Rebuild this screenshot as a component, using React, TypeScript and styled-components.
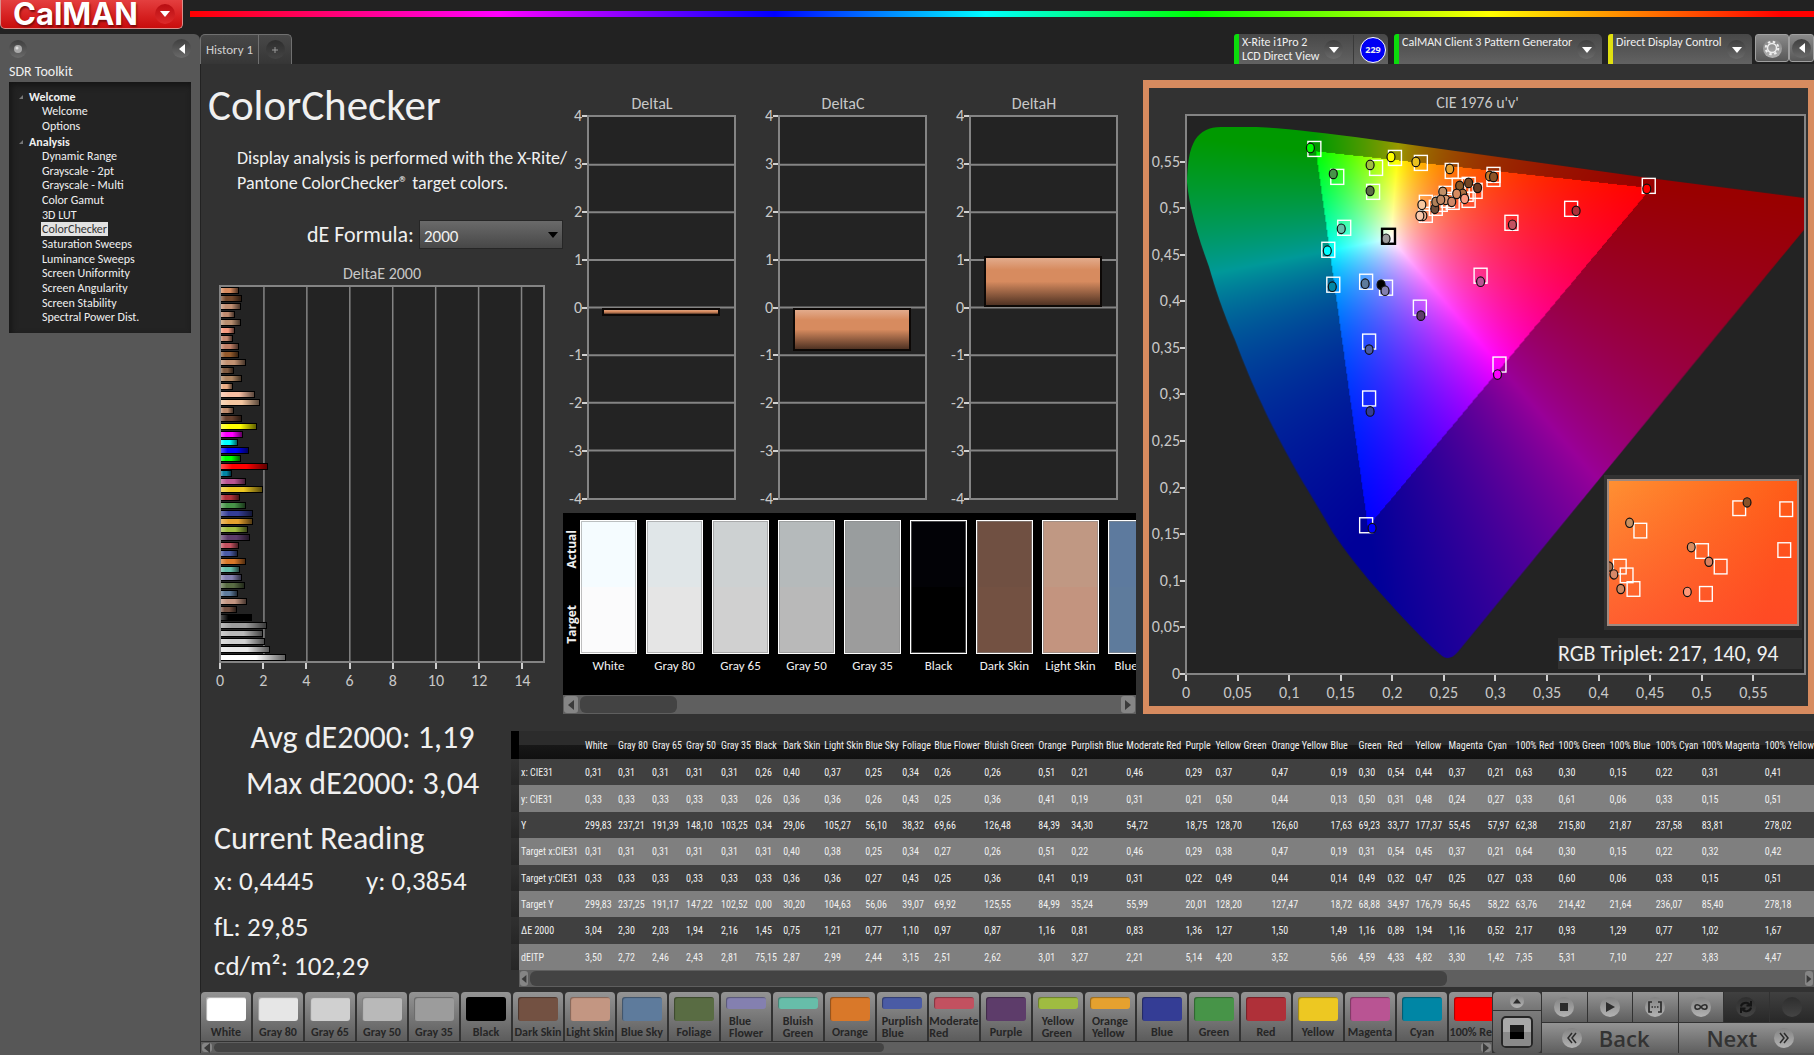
import React, { useEffect, useRef } from 'react';
import styled, { createGlobalStyle } from 'styled-components';

const SANS = 'Carlito, Calibri, Lato, sans-serif';
const HUMANIST = '"Open Sans", "Noto Sans", sans-serif';
const NARROW = '"Roboto Condensed", Carlito, sans-serif';

const color = {
  chrome: '#222222',
  panel: '#323232',
  plot: '#232323',
  line: '#848484',
  text: '#f0f0f0',
  axis: '#c8c8c8',
  track: '#5f5f5f',
  thumb: '#434343',
  accent: '#d78b5f',
};

const Global = createGlobalStyle`
  * { box-sizing: border-box; }
  body { margin: 0; background: ${color.chrome}; color: ${color.text}; font-family: ${SANS}; overflow: hidden; }
  button { border: 0; padding: 0; margin: 0; font: inherit; color: inherit; background: none; cursor: pointer; }
  h1, h2, p, ul, dl, dd, dt { margin: 0; padding: 0; }
  ul { list-style: none; }
`;

/* ---------- shell ---------- */

const Shell = styled.div`
  min-height: 100vh;
  display: grid;
  grid-template-rows: 34px 1fr;
  background: ${color.chrome};
`;

const TopBar = styled.header`
  display: flex;
  align-items: flex-start;
  gap: 7px;
`;

const Logo = styled.button`
  flex: none;
  display: flex;
  align-items: center;
  justify-content: space-between;
  width: 183px;
  height: 29px;
  padding: 0 7px 1px 12px;
  border: 1px solid #d9908c;
  border-top: 0;
  border-radius: 0 0 5px 5px;
  background: linear-gradient(#e43f3f, #d51f1f 60%, #c80d0d);
  font: 700 31px/28px Inter, sans-serif;
  color: #fff;
  text-shadow: 1px 2px 2px #7a0a0a;
`;

const Spectrum = styled.div`
  flex: 1;
  height: 6px;
  margin-top: 11px;
  background: linear-gradient(90deg, #f00, #f0f 19%, #00f 36%, #0ff 49%, #0f0 62%, #ff0 80%, #f00 98%);
`;

const Body = styled.div`
  display: grid;
  grid-template-columns: 200px minmax(0, 1fr);
`;

const Dial = styled.span<{ $size: number; $tone?: 'red' | 'dark' | 'light' | 'off' }>`
  flex: none;
  display: inline-flex;
  align-items: center;
  justify-content: center;
  width: ${(p) => p.$size}px;
  height: ${(p) => p.$size}px;
  border-radius: 50%;
  background: ${(p) =>
    p.$tone === 'red'
      ? 'linear-gradient(#b80d12, #dd2a2a)'
      : p.$tone === 'light'
        ? 'linear-gradient(#828282, #b4b4b4)'
        : p.$tone === 'off'
          ? 'linear-gradient(#2e2e2e, #444444)'
          : 'linear-gradient(#3f3f3f, #6a6a6a)'};
`;

/* ---------- sidebar ---------- */

const Sidebar = styled.aside`
  padding: 5px 9px 0;
  border-top-right-radius: 6px;
  background: #575757;
`;

const SidebarTools = styled.div`
  display: flex;
  align-items: center;
  justify-content: space-between;
  height: 19px;
  button {
    display: flex;
  }
`;

const SidebarTitle = styled.h2`
  margin-top: 3px;
  font-size: 14px;
  font-weight: 400;
  line-height: 21px;
`;

const Tree = styled.nav`
  height: 251px;
  padding: 7px 10px 0;
  background: ${color.plot};
  box-shadow: inset 2px 3px 6px #141414;
  font-size: 12px;
`;

const TreeGroup = styled.div`
  display: flex;
  align-items: center;
  gap: 6px;
  height: 15px;
  font-weight: 700;
`;

const TreeList = styled.ul<{ $rows: number }>`
  display: grid;
  grid-template-rows: repeat(${(p) => p.$rows}, 1fr);
  height: ${(p) => (p.$rows > 2 ? 176 : 30)}px;
  padding-left: 22px;
`;

const TreeLink = styled.a<{ $active?: boolean }>`
  display: inline-block;
  padding: 0 1px;
  line-height: 14px;
  text-decoration: none;
  color: ${(p) => (p.$active ? '#333' : color.text)};
  background: ${(p) => (p.$active ? '#e2e2e2' : 'transparent')};
`;

/* ---------- tabs and devices ---------- */

const Workspace = styled.div`
  display: grid;
  grid-template-rows: 30px auto 63px;
  align-content: start;
  min-width: 0;
`;

const TabStrip = styled.div`
  display: flex;
  justify-content: space-between;
`;

const Tabs = styled.div`
  display: flex;
  border: 1px solid #707070;
  border-bottom: 0;
  border-radius: 5px 5px 0 0;
  background: linear-gradient(#484848, #363636);
`;

const Tab = styled.button<{ $w: number }>`
  width: ${(p) => p.$w}px;
  font-size: 13px;
  color: #d0d0d0;
  & + & {
    border-left: 1px solid #707070;
  }
`;

const Devices = styled.div`
  display: flex;
  gap: 6px;
`;

const Device = styled.div<{ $w: number; $light: string }>`
  display: flex;
  justify-content: space-between;
  width: ${(p) => p.$w}px;
  padding: 1px 6px 0 3px;
  border-left: 5px solid ${(p) => p.$light};
  border-radius: 3px 5px 0 0;
  background: linear-gradient(#484848, #626262);
  font-size: 12px;
  line-height: 14px;
  white-space: nowrap;
`;

const DeviceButton = styled.button`
  flex: 1;
  display: flex;
  justify-content: space-between;
  align-items: flex-start;
  text-align: left;
  ${Dial} {
    margin-top: 5px;
  }
`;

const Meter = styled.div`
  display: flex;
  align-items: center;
  margin: 0 -4px 0 10px;
  padding-left: 6px;
  border-left: 1px solid #3a3a3a;
`;

const Badge = styled.span`
  display: flex;
  align-items: center;
  justify-content: center;
  width: 26px;
  height: 26px;
  border: 1px solid #fff;
  border-radius: 50%;
  background: #0000f4;
  font: 700 9px/12px ${HUMANIST};
`;

const WindowTools = styled.div`
  display: flex;
  margin-left: -3px;
`;

const ToolButton = styled.button<{ $w: number }>`
  display: flex;
  align-items: center;
  justify-content: center;
  width: ${(p) => p.$w}px;
  height: 28px;
  border: 1px solid #a0a0a0;
  border-radius: 3px;
  background: linear-gradient(#8a8a8a, #575757);
`;

/* ---------- content ---------- */

const Content = styled.main`
  border-left: 1px solid #222;
  background: ${color.panel};
`;

const Upper = styled.div`
  display: grid;
  grid-template-columns: minmax(0, 354fr) minmax(0, 581fr) minmax(0, 678fr);
`;

const Intro = styled.section`
  padding: 16px 0 0 7px;
`;

const Title = styled.h1`
  font-size: 43px;
  font-weight: 400;
  line-height: 52px;
`;

const Lead = styled.p`
  margin: 14px 0 0 29px;
  font-size: 18px;
  line-height: 25px;
  white-space: nowrap;
`;

const FormulaRow = styled.div`
  display: flex;
  align-items: center;
  gap: 5px;
  margin: 24px 0 0 99px;
  font-size: 22px;
  line-height: 29px;
  white-space: nowrap;
`;

const SelectBox = styled.div`
  position: relative;
  svg {
    position: absolute;
    right: 5px;
    top: 10px;
    pointer-events: none;
  }
`;

const Select = styled.select`
  appearance: none;
  display: block;
  width: 144px;
  height: 29px;
  padding: 4px 4px 0;
  border: 1px solid #262626;
  border-radius: 0;
  background: linear-gradient(#6a6a6a, #474747);
  color: ${color.text};
  font: 17px ${SANS};
`;

/* ---------- charts ---------- */

const ChartTitle = styled.h2`
  font-size: 16px;
  font-weight: 400;
  line-height: 20px;
  text-align: center;
  color: ${color.axis};
`;

const ChartGrid = styled.div<{ $axis: number; $h: number }>`
  display: grid;
  grid-template-columns: ${(p) => p.$axis}px minmax(0, 1fr);
  grid-template-rows: ${(p) => p.$h}px auto;
  margin-top: 1px;
`;

const Plot = styled.div`
  position: relative;
  grid-column: 2;
  border: 2px solid ${color.line};
  background: ${color.plot};
  & > svg,
  & > canvas {
    position: absolute;
    inset: 0;
    width: 100%;
    height: 100%;
  }
`;

const YAxis = styled.div`
  display: flex;
  flex-direction: column;
  justify-content: space-between;
  padding: 1px 0;
  font-size: 16px;
  color: ${color.axis};
`;

const YTick = styled.span`
  display: flex;
  align-items: center;
  justify-content: flex-end;
  height: 0;
  line-height: 0;
  &:not(:empty)::after {
    content: '';
    width: 5px;
    height: 2px;
    background: #d0d0d0;
  }
`;

const XAxis = styled.div`
  grid-column: 2;
  display: flex;
  justify-content: space-between;
  padding: 0 1px;
  font-size: 16px;
  line-height: 20px;
  color: ${color.axis};
`;

const XTick = styled.span`
  display: flex;
  flex-direction: column;
  align-items: center;
  gap: 2px;
  width: 0;
  white-space: nowrap;
  &:not(:empty)::before {
    content: '';
    width: 2px;
    height: 6px;
    background: #d0d0d0;
  }
`;

const ErrorChart = styled.div`
  margin-top: 15px;
  padding: 0 10px 0 11px;
`;

const BarStack = styled.div`
  position: relative;
  display: grid;
  grid-auto-rows: 1fr;
  align-items: center;
  height: 100%;
`;

const HBar = styled.div<{ $c: string }>`
  height: 7px;
  border: 1px solid #000;
  border-left: 0;
  background: linear-gradient(90deg, #ffffff50, #ffffff00 24%, #00000000 55%, #000000a0), ${(p) => p.$c};
`;

const Middle = styled.section`
  padding: 30px 0 0 8px;
`;

const DeltaRow = styled.div`
  display: grid;
  grid-template-columns: repeat(3, minmax(0, 1fr));
  gap: 23px;
  padding: 0 18px 0 5px;
`;

const DeltaBar = styled.div`
  position: absolute;
  left: 9%;
  right: 10%;
  border: 2px solid #0c0806;
  background: linear-gradient(#e2ab8c, ${color.accent} 25%, ${color.accent} 50%, #4f3223);
`;

/* ---------- swatches ---------- */

const SwatchPanel = styled.div`
  margin-top: 13px;
  background: #000;
`;

const SwatchRow = styled.div`
  display: flex;
  gap: 9px;
  height: 182px;
  padding: 7px 0 0 1px;
  overflow: hidden;
`;

const SideLabels = styled.div`
  flex: none;
  display: flex;
  flex-direction: column;
  justify-content: space-between;
  align-items: center;
  width: 16px;
  height: 134px;
  margin-right: -9px;
  padding: 10px 0;
  font: 700 12px/16px ${HUMANIST};
`;

const Upright = styled.span`
  writing-mode: vertical-rl;
  transform: rotate(180deg);
`;

const Swatch = styled.figure`
  flex: none;
  width: 57px;
  margin: 0;
`;

const SwatchFill = styled.div<{ $actual: string; $target: string }>`
  height: 134px;
  border: 1px solid #fff;
  box-shadow: inset 0 0 0 1px #8888;
  background: linear-gradient(${(p) => p.$actual} 50%, ${(p) => p.$target} 50%);
`;

const SwatchName = styled.figcaption`
  margin: 3px -6px 0;
  font-size: 13px;
  line-height: 18px;
  text-align: center;
  white-space: nowrap;
`;

const Scroll = styled.div<{ $h: number }>`
  display: flex;
  align-items: center;
  justify-content: space-between;
  gap: 2px;
  height: ${(p) => p.$h}px;
  padding: 0 1px;
  background: ${color.track};
`;

const ScrollLane = styled.div`
  flex: 1;
  height: 100%;
  padding: 1px 0;
`;

const Thumb = styled.div`
  height: 100%;
  border-radius: 6px;
  background: ${color.thumb};
`;

const ScrollButton = styled.button<{ $w: number }>`
  display: flex;
  align-items: center;
  justify-content: center;
  width: ${(p) => p.$w}px;
  height: calc(100% - 2px);
  border-radius: 3px;
  background: #858585;
`;

/* ---------- chromaticity ---------- */

const CiePanel = styled.section`
  margin: 16px 0 0 7px;
  padding: 5px 2px 3px 0;
  border: solid ${color.accent};
  border-width: 8px 6px;
`;

const Inset = styled.div`
  position: absolute;
  right: 2px;
  bottom: 43px;
  width: 198px;
  height: 155px;
  padding: 4px 3px;
  background: ${color.panel};
  svg {
    display: block;
    width: 100%;
    height: 100%;
    border: 2px solid #a08a80;
    background:
      linear-gradient(180deg, #ff4a4000, #ff3a3480),
      linear-gradient(105deg, #ff9032, #ff5a16 85%);
  }
`;

const Triplet = styled.output`
  position: absolute;
  right: 2px;
  bottom: 4px;
  width: 244px;
  background: ${color.panel};
  font-size: 22px;
  line-height: 31px;
  white-space: nowrap;
`;

/* ---------- readings and table ---------- */

const Lower = styled.div`
  display: grid;
  grid-template-columns: 310px minmax(0, 1fr);
  height: 278px;
  padding-top: 4px;
`;

const Readings = styled.section`
  padding: 0 0 0 13px;
  white-space: nowrap;
`;

const Summary = styled.p`
  margin-bottom: 6px;
  font-size: 32px;
  line-height: 40px;
  text-align: center;
`;

const ReadingTitle = styled.h2`
  margin-top: 15px;
  font-size: 32px;
  font-weight: 400;
  line-height: 40px;
`;

const Reading = styled.p`
  display: grid;
  grid-template-columns: 152px auto;
  margin-top: 5px;
  font-size: 27px;
  line-height: 34px;
`;

const ReadingGap = styled(Reading)`
  margin-top: 12px;
`;

const TableArea = styled.section`
  padding-top: 13px;
`;

const TableScroll = styled.div`
  margin-left: 8px;
`;

const Table = styled.table`
  width: 100%;
  height: 239px;
  table-layout: fixed;
  border-collapse: collapse;
  font: 400 10px/16px ${NARROW};
  white-space: nowrap;
`;

const Col = styled.col<{ $w: number }>`
  width: ${(p) => p.$w}px;
`;

const HeadRow = styled.tr`
  height: 28px;
  background: linear-gradient(#2c2c2c 50%, #181818 50%, #101010);
`;

const Row = styled.tr<{ $odd: boolean }>`
  background: ${(p) => (p.$odd ? '#7f7f7f' : '#404040')};
`;

const Gutter = styled.td<{ $head?: boolean }>`
  padding: 0;
  background: ${(p) => (p.$head ? '#000' : 'linear-gradient(#303030, #262626)')};
`;

const Th = styled.th`
  padding: 2px 0 0 2px;
  font-weight: 400;
  text-align: left;
`;

const Td = styled.td`
  padding: 2px 0 0 2px;
`;

/* ---------- bottom bar ---------- */

const Bottom = styled.footer`
  display: grid;
  grid-template-columns: minmax(0, 1fr) 48px 272px;
  gap: 1px;
  height: 63px;
  padding-left: 1px;
  border-bottom: 2px solid #565656;
  background: ${color.panel};
`;

const Palette = styled.div`
  display: grid;
  grid-template-rows: 50px 11px;
  min-width: 0;
`;

const PaletteRow = styled.div`
  display: flex;
  gap: 2px;
  overflow: hidden;
`;

const PatchButton = styled.button`
  flex: none;
  display: flex;
  flex-direction: column;
  align-items: center;
  justify-content: space-between;
  width: 50px;
  height: 49px;
  padding: 5px 0 2px;
  border-radius: 4px 4px 0 0;
  background: linear-gradient(#949494, #5c5c5c);
  font-size: 12px;
  font-weight: 700;
  line-height: 12px;
  color: #262626;
`;

const Chip = styled.span<{ $c: string; $short: boolean }>`
  width: 40px;
  height: ${(p) => (p.$short ? 12 : 24)}px;
  border-radius: 3px;
  background: ${(p) => p.$c};
  box-shadow: inset 1px 1px 1px #0005;
`;

const ChipName = styled.span<{ $multi: boolean }>`
  text-align: left;
  white-space: pre;
  padding-bottom: ${(p) => (p.$multi ? 0 : 1)}px;
`;

const StopBlock = styled.div`
  display: grid;
  grid-template-rows: 18px 1fr;
  gap: 1px;
`;

const Plain = styled.button`
  display: flex;
  align-items: center;
  justify-content: center;
  border-radius: 4px 4px 0 0;
  background: linear-gradient(#8e8e8e, #757575);
  & + & {
    border-radius: 0 0 4px 4px;
    background: linear-gradient(#7c7c7c, #585858);
  }
`;

const Transport = styled.div`
  display: grid;
  grid-template-rows: 30px 30px;
  gap: 1px;
`;

const TransportRow = styled.div<{ $cols: number }>`
  display: grid;
  grid-template-columns: repeat(${(p) => p.$cols}, 1fr);
  gap: 1px;
`;

const TransportButton = styled.button<{ $off?: boolean }>`
  display: flex;
  align-items: center;
  justify-content: center;
  background: ${(p) => (p.$off ? 'linear-gradient(#404040, #282828)' : 'linear-gradient(#949494, #5e5e5e)')};
`;

const StepButton = styled(TransportButton)<{ $side: 'back' | 'next' }>`
  gap: 17px;
  flex-direction: ${(p) => (p.$side === 'back' ? 'row' : 'row-reverse')};
  padding: ${(p) => (p.$side === 'back' ? '0 8px 0 0' : '0 0 0 8px')};
  font: 600 22px/28px ${HUMANIST};
  color: #333;
`;

/* ---------- data ---------- */

const tree = [
  { name: 'Welcome', items: ['Welcome', 'Options'] },
  {
    name: 'Analysis',
    items: [
      'Dynamic Range', 'Grayscale - 2pt', 'Grayscale - Multi', 'Color Gamut', '3D LUT', 'ColorChecker',
      'Saturation Sweeps', 'Luminance Sweeps', 'Screen Uniformity', 'Screen Angularity', 'Screen Stability',
      'Spectral Power Dist.',
    ],
  },
];

const patches: [string, string, number][] = [
  ['White', '#ffffff', 33], ['Gray 80', '#e6e6e6', 34], ['Gray 65', '#d0d0d0', 34], ['Gray 50', '#b9b9b9', 35],
  ['Gray 35', '#9c9c9c', 34], ['Black', '#000000', 28], ['Dark Skin', '#735142', 41], ['Light Skin', '#c39682', 41],
  ['Blue Sky', '#5e7b9c', 37], ['Foliage', '#596c43', 32], ['Blue Flower', '#8480b0', 50], ['Bluish Green', '#67bda9', 54],
  ['Orange', '#d97829', 33], ['Purplish Blue', '#4a5ba5', 55], ['Moderate Red', '#c25160', 59], ['Purple', '#5d3c6a', 30],
  ['Yellow Green', '#9fbc41', 56], ['Orange Yellow', '#e5a12f', 59], ['Blue', '#343d95', 28], ['Green', '#479448', 29],
  ['Red', '#af3039', 28], ['Yellow', '#edc822', 33], ['Magenta', '#b95493', 39], ['Cyan', '#0086a5', 28],
  ['100% Red', '#ff0000', 43], ['100% Green', '#00ff00', 51], ['100% Blue', '#0000ff', 46], ['100% Cyan', '#00ffff', 46],
  ['100% Magenta', '#ff00ff', 63], ['100% Yellow', '#ffff00', 51],
];

const tableRows: [string, string][] = [
  ['x: CIE31', '0,31 0,31 0,31 0,31 0,31 0,26 0,40 0,37 0,25 0,34 0,26 0,26 0,51 0,21 0,46 0,29 0,37 0,47 0,19 0,30 0,54 0,44 0,37 0,21 0,63 0,30 0,15 0,22 0,31 0,41'],
  ['y: CIE31', '0,33 0,33 0,33 0,33 0,33 0,26 0,36 0,36 0,26 0,43 0,25 0,36 0,41 0,19 0,31 0,21 0,50 0,44 0,13 0,50 0,31 0,48 0,24 0,27 0,33 0,61 0,06 0,33 0,15 0,51'],
  ['Y', '299,83 237,21 191,39 148,10 103,25 0,34 29,06 105,27 56,10 38,32 69,66 126,48 84,39 34,30 54,72 18,75 128,70 126,60 17,63 69,23 33,77 177,37 55,45 57,97 62,38 215,80 21,87 237,58 83,81 278,02'],
  ['Target x:CIE31', '0,31 0,31 0,31 0,31 0,31 0,31 0,40 0,38 0,25 0,34 0,27 0,26 0,51 0,22 0,46 0,29 0,38 0,47 0,19 0,31 0,54 0,45 0,37 0,21 0,64 0,30 0,15 0,22 0,32 0,42'],
  ['Target y:CIE31', '0,33 0,33 0,33 0,33 0,33 0,33 0,36 0,36 0,27 0,43 0,25 0,36 0,41 0,19 0,31 0,22 0,49 0,44 0,14 0,49 0,32 0,47 0,25 0,27 0,33 0,60 0,06 0,33 0,15 0,51'],
  ['Target Y', '299,83 237,25 191,17 147,22 102,52 0,00 30,20 104,63 56,06 39,07 69,92 125,55 84,99 35,24 55,99 20,01 128,20 127,47 18,72 68,88 34,97 176,79 56,45 58,22 63,76 214,42 21,64 236,07 85,40 278,18'],
  ['ΔE 2000', '3,04 2,30 2,03 1,94 2,16 1,45 0,75 1,21 0,77 1,10 0,97 0,87 1,16 0,81 0,83 1,36 1,27 1,50 1,49 1,16 0,89 1,94 1,16 0,52 2,17 0,93 1,29 0,77 1,02 1,67'],
  ['dEITP', '3,50 2,72 2,46 2,43 2,81 75,15 2,87 2,99 2,44 3,15 2,51 2,62 3,01 3,27 2,21 5,14 4,20 3,52 5,66 4,59 4,33 4,82 3,30 1,42 7,35 5,31 7,10 2,27 3,83 4,47'],
];

const skinErrors: [number, string][] = [
  [0.82, '#d78b5f'], [1.0, '#75492c'], [0.95, '#c18f72'], [0.67, '#c08c70'], [0.95, '#b88f70'], [0.67, '#f59a80'],
  [0.58, '#c48870'], [0.82, '#c07f66'], [0.82, '#935a2c'], [1.18, '#c29272'], [0.62, '#7f5a40'], [1.0, '#b08662'],
  [0.58, '#eaac84'], [1.6, '#f8c0a4'], [1.8, '#f5c6a0'], [0.62, '#bd8a6c'], [1.0, '#67402e'],
];

const deltaErrors: [number, string][] = [
  ...skinErrors,
  ...tableRows[6][1].split(' ').map((v, i): [number, string] => [Number(v.replace(',', '.')), patches[i][1]]).reverse(),
];

const comparisons: [string, string, string][] = [
  ['White', '#f5fcff', '#fbfbfc'], ['Gray 80', '#e0e6e8', '#e5e5e5'], ['Gray 65', '#cdd1d2', '#d0d0d0'],
  ['Gray 50', '#b5babb', '#b9b9b9'], ['Gray 35', '#999d9e', '#9c9c9c'], ['Black', '#020206', '#000000'],
  ['Dark Skin', '#705042', '#735142'], ['Light Skin', '#c09883', '#c3947f'], ['Blue Sky', '#5d7a9e', '#5e7b9c'],
];

/* Plot coordinates on the 620 x 558 chromaticity drawing. */
const targets = [
  [128, 33], [209, 42], [235, 47], [190, 52], [151, 61], [187, 76], [266, 55], [308, 59], [308, 63], [464, 70],
  [386, 93], [326, 107], [158, 112], [142, 134], [147, 169], [180, 166], [200, 172], [295, 160], [234, 192],
  [183, 226], [183, 283], [314, 249], [180, 410], [240, 87], [240, 99], [260, 78], [250, 92], [255, 88], [267, 86],
  [273, 70], [283, 69], [290, 75], [283, 84], [281, 78], [262, 84],
];

const measured: [number, number, string][] = [
  [124, 32, '#00ff00'], [205, 41, '#ffff00'], [230, 46, '#e8c020'], [184, 49, '#9fbc41'], [147, 58, '#479448'],
  [184, 75, '#596c43'], [264, 53, '#e5a12f'], [304, 60, '#c87828'], [308, 61, '#8c5428'], [462, 73, '#ff0000'],
  [391, 95, '#af3039'], [327, 109, '#c25160'], [155, 113, '#67bda9'], [200, 123, '#9c9c9c'], [141, 135, '#00ffff'],
  [146, 171, '#0086a5'], [179, 168, '#5e7b9c'], [195, 169, '#000000'], [199, 175, '#8480b0'], [295, 166, '#b95493'],
  [235, 200, '#5d3c6a'], [183, 234, '#4a5ba5'], [184, 296, '#343d95'], [312, 259, '#ff00ff'], [186, 413, '#0000ff'],
  [236, 89, '#f8c8a0'], [237, 100, '#f0b090'], [234, 100, '#fac8ac'], [257, 76, '#c09068'], [249, 93, '#6e4c38'],
  [250, 86, '#b08058'], [260, 84, '#d89870'], [255, 84, '#c08864'], [266, 86, '#d08868'], [274, 70, '#8a5828'],
  [283, 67, '#744624'], [292, 72, '#6a3c24'], [277, 78, '#b07040'], [271, 78, '#d88c60'], [279, 83, '#ff9c80'],
];

const insetTargets = [
  [133, 28], [181, 29], [32, 51], [95, 72], [114, 88], [179, 71], [11, 88], [18, 97], [25, 111], [99, 116],
];

const insetMeasured: [number, number, string][] = [
  [141, 22, '#8a5228'], [21, 43, '#c89060'], [84, 68, '#d88c60'], [102, 83, '#d88060'], [5, 96, '#d88868'],
  [12, 111, '#d08860'], [80, 114, '#ff9878'], [0, 88, '#a06848'],
];

/* ---------- pieces ---------- */

const Triangle = ({ dir, size, fill }: { dir: 'down' | 'left' | 'right' | 'up'; size: number; fill: string }) => {
  const d = { down: 'M0 2H10L5 8Z', up: 'M0 8H10L5 2Z', left: 'M8 0V10L2 5Z', right: 'M2 0V10L8 5Z' }[dir];
  return (
    <svg width={size} height={size} viewBox="0 0 10 10" aria-hidden="true">
      <path d={d} fill={fill} />
    </svg>
  );
};

const ScrollBar = ({ height, arrow, from, to }: { height: number; arrow: number; from: number; to: number }) => (
  <Scroll $h={height}>
    <ScrollButton $w={arrow} aria-label="Scroll left"><Triangle dir="left" size={10} fill="#3a3a3a" /></ScrollButton>
    <ScrollLane><Thumb style={{ marginLeft: `${from}%`, width: `${to - from}%` }} /></ScrollLane>
    <ScrollButton $w={arrow} aria-label="Scroll right"><Triangle dir="right" size={10} fill="#3a3a3a" /></ScrollButton>
  </Scroll>
);

const DeltaChart = ({ name, value }: { name: string; value: number }) => (
  <div>
    <ChartTitle>{name}</ChartTitle>
    <ChartGrid $axis={19} $h={385}>
      <YAxis>{[4, 3, 2, 1, 0, -1, -2, -3, -4].map((t) => <YTick key={t}>{t}</YTick>)}</YAxis>
      <Plot>
        <svg aria-hidden="true">
          {[1, 2, 3, 4, 5, 6, 7].map((i) => (
            <line key={i} x1="0" x2="100%" y1={`${i * 12.5}%`} y2={`${i * 12.5}%`} stroke={color.line} strokeWidth="2" />
          ))}
        </svg>
        <DeltaBar
          style={{ top: `${(4 - Math.max(value, 0)) * 12.5}%`, height: `${Math.abs(value) * 12.5}%` }}
        />
      </Plot>
    </ChartGrid>
  </div>
);

const LOCUS =
  'M0 66 C1 42 3 33 8 24 C14 15 22 11 34 11 L70 11 C95 12 130 16 169 21 L464 62 L620 82 V114 L529 224 L272 537 ' +
  'C266 544 260 545 254 539 C232 520 205 490 182 464 C165 443 155 430 147 418 C132 392 122 376 113 361 ' +
  'C100 338 88 316 79 297 C67 272 57 248 48 224 C36 196 28 172 22 151 C10 118 2 90 0 66 Z';

const side = (px: number, py: number, a: number[], b: number[]) =>
  (px - b[0]) * (a[1] - b[1]) - (a[0] - b[0]) * (py - b[1]);

const Gamut = () => {
  const ref = useRef<HTMLCanvasElement>(null);
  useEffect(() => {
    const canvas = ref.current;
    const ctx = canvas?.getContext('2d');
    if (!canvas || !ctx) return;
    const { width, height } = canvas;
    const image = ctx.createImageData(width, height);
    const r = [0.4507, 0.5229];
    const g = [0.125, 0.5625];
    const b = [0.1754, 0.1579];
    for (let py = 0; py < height; py++) {
      for (let px = 0; px < width; px++) {
        const u = (px / width) * 0.6;
        const v = 0.6 - (py / height) * 0.6;
        const X = (9 * u) / (4 * Math.max(v, 0.001));
        const Z = (12 - 3 * u - 20 * v) / (4 * Math.max(v, 0.001));
        const lin = [
          3.2406 * X - 1.5372 - 0.4986 * Z,
          -0.9689 * X + 1.8758 + 0.0415 * Z,
          0.0557 * X - 0.204 + 1.057 * Z,
        ].map((n) => Math.max(n, 0));
        const peak = Math.max(...lin) || 1;
        const s = [side(u, v, r, g), side(u, v, g, b), side(u, v, b, r)];
        const inside = s.every((n) => n >= 0) || s.every((n) => n <= 0);
        const i = (py * width + px) * 4;
        lin.forEach((n, k) => {
          image.data[i + k] = (n / peak) * 255 * (inside ? 1 : 0.6);
        });
        image.data[i + 3] = 255;
      }
    }
    ctx.putImageData(image, 0, 0);
    ctx.globalCompositeOperation = 'destination-in';
    ctx.fill(new Path2D(LOCUS));
  }, []);
  return <canvas ref={ref} width={620} height={558} role="img" aria-label="CIE 1976 chromaticity diagram" />;
};

const Marks = ({ squares, dots }: { squares: number[][]; dots: [number, number, string][] }) => (
  <>
    {squares.map(([x, y], i) => (
      <rect key={i} x={x - 6.5} y={y - 7.5} width="13" height="15" fill="none" stroke="#fff" strokeWidth="1.4" />
    ))}
    {dots.map(([x, y, c], i) => (
      <ellipse key={i} cx={x} cy={y} rx="4" ry="4.8" fill={c} stroke="#101010" strokeWidth="1.2" />
    ))}
  </>
);

const comma = (n: number) => String(n).replace('.', ',');
const cieTicks = Array.from({ length: 13 }, (_, i) => (i === 12 ? '' : comma(Math.round(i * 5) / 100)));

const CieChart = () => (
  <CiePanel>
    <ChartTitle>CIE 1976 u'v'</ChartTitle>
    <ChartGrid $axis={36} $h={561}>
      <YAxis>{[...cieTicks].reverse().map((t, i) => <YTick key={i}>{t}</YTick>)}</YAxis>
      <Plot>
        <Gamut />
        <svg viewBox="0 0 620 558" preserveAspectRatio="none" aria-hidden="true">
          <Marks squares={targets} dots={[]} />
          <rect x="196" y="113" width="13" height="15" fill="none" stroke="#000" strokeWidth="2.4" />
          <Marks squares={[]} dots={measured} />
        </svg>
        <Inset>
          <svg viewBox="0 0 192 147" preserveAspectRatio="none" aria-hidden="true">
            <Marks squares={insetTargets} dots={insetMeasured} />
          </svg>
        </Inset>
        <Triplet>RGB Triplet: 217, 140, 94</Triplet>
      </Plot>
      <XAxis>{cieTicks.map((t, i) => <XTick key={i}>{t}</XTick>)}</XAxis>
    </ChartGrid>
  </CiePanel>
);

const ErrorBars = () => (
  <ErrorChart>
    <ChartTitle>DeltaE 2000</ChartTitle>
    <ChartGrid $axis={0} $h={378}>
      <Plot>
        <svg aria-hidden="true">
          {[2, 4, 6, 8, 10, 12, 14].map((v) => (
            <line key={v} x1={`${(v / 15) * 100}%`} x2={`${(v / 15) * 100}%`} y1="0" y2="100%" stroke={color.line} strokeWidth="1.5" />
          ))}
        </svg>
        <BarStack>
          {deltaErrors.map(([v, c], i) => <HBar key={i} $c={c} style={{ width: `${(v / 15) * 100}%` }} />)}
        </BarStack>
      </Plot>
      <XAxis>{Array.from({ length: 16 }, (_, i) => <XTick key={i}>{i % 2 ? '' : i}</XTick>)}</XAxis>
    </ChartGrid>
  </ErrorChart>
);

const ReadingTable = () => (
  <TableArea>
    <Table>
      <colgroup>
        <Col $w={8} />
        <Col $w={64} />
        {patches.map(([name, , w]) => <Col key={name} $w={w} />)}
      </colgroup>
      <thead>
        <HeadRow>
          <Gutter $head />
          <Td />
          {patches.map(([name]) => <Th key={name} scope="col">{name}</Th>)}
        </HeadRow>
      </thead>
      <tbody>
        {tableRows.map(([label, values], r) => (
          <Row key={label} $odd={r % 2 === 1}>
            <Gutter />
            <Th scope="row">{label}</Th>
            {values.split(' ').map((v, i) => <Td key={i}>{v}</Td>)}
          </Row>
        ))}
      </tbody>
    </Table>
    <TableScroll><ScrollBar height={17} arrow={8} from={0} to={72} /></TableScroll>
  </TableArea>
);

const ink = '#2c2c2c';
const transportIcons: [string, React.ReactNode][] = [
  ['Stop', <rect x="6" y="6" width="8" height="8" fill={ink} />],
  ['Play', <path d="M6 5V15L15 10Z" fill={ink} />],
  ['Read series', <path d="M7 5H4V15H7M13 5H16V15H13M6.5 10H8M9.3 10H10.7M12 10H13.5" fill="none" stroke={ink} strokeWidth="1.7" />],
  ['Read continuous', <path d="M10 10C8 7 4 7 4 10S8 13 10 10S16 7 16 10S12 13 10 10Z" fill="none" stroke={ink} strokeWidth="1.6" />],
  ['Refresh', <path d="M5 9.5C5.500 6 11 4.500 13.500 7.500M15 4V8.500H10.500M15 10.500C14.500 14 9 15.500 6.500 12.500M5 16V11.500H9.500" fill="none" stroke="#151515" strokeWidth="2" />],
  ['Record', null],
];

const twoLine = ['Blue Flower', 'Bluish Green', 'Purplish Blue', 'Moderate Red', 'Yellow Green', 'Orange Yellow'];

export default function App() {
  return (
    <>
      <Global />
      <Shell>
        <TopBar>
          <Logo>
            CalMAN
            <Dial $size={20} $tone="red"><Triangle dir="down" size={10} fill="#fff" /></Dial>
          </Logo>
          <Spectrum />
        </TopBar>
        <Body>
          <Sidebar>
            <SidebarTools>
              <button aria-label="Options">
                <Dial $size={18}>
                  <svg width="8" height="8" viewBox="0 0 8 8"><circle cx="4" cy="4" r="4" fill="#a8a8a8" /><circle cx="3" cy="3" r="1.500" fill="#dedede" /></svg>
                </Dial>
              </button>
              <button aria-label="Collapse sidebar">
                <Dial $size={19}><Triangle dir="left" size={10} fill="#fff" /></Dial>
              </button>
            </SidebarTools>
            <SidebarTitle>SDR Toolkit</SidebarTitle>
            <Tree>
              {tree.map((group) => (
                <React.Fragment key={group.name}>
                  <TreeGroup>
                    <svg width="4" height="4" viewBox="0 0 4 4"><path d="M4 0V4H0Z" fill="#777" /></svg>
                    {group.name}
                  </TreeGroup>
                  <TreeList $rows={group.items.length}>
                    {group.items.map((item) => (
                      <li key={item}><TreeLink href="#" $active={item === 'ColorChecker'}>{item}</TreeLink></li>
                    ))}
                  </TreeList>
                </React.Fragment>
              ))}
            </Tree>
          </Sidebar>

          <Workspace>
            <TabStrip>
              <Tabs>
                <Tab $w={57}>History 1</Tab>
                <Tab $w={33} aria-label="Add history">
                  <Dial $size={19} $tone="off">
                    <svg width="8" height="8" viewBox="0 0 8 8"><path d="M4 1V7M1 4H7" stroke="#999" /></svg>
                  </Dial>
                </Tab>
              </Tabs>
              <Devices>
                <Device $w={154} $light="#0bdc0b">
                  <DeviceButton>
                    <span>X-Rite i1Pro 2<br />LCD Direct View</span>
                    <Dial $size={19}><Triangle dir="down" size={10} fill="#fff" /></Dial>
                  </DeviceButton>
                  <Meter><Badge>229</Badge></Meter>
                </Device>
                <Device $w={208} $light="#0bdc0b">
                  <DeviceButton>
                    CalMAN Client 3 Pattern Generator
                    <Dial $size={19}><Triangle dir="down" size={10} fill="#fff" /></Dial>
                  </DeviceButton>
                </Device>
                <Device $w={144} $light="#e0e010">
                  <DeviceButton>
                    Direct Display Control
                    <Dial $size={19}><Triangle dir="down" size={10} fill="#fff" /></Dial>
                  </DeviceButton>
                </Device>
                <WindowTools>
                  <ToolButton $w={34} aria-label="Settings">
                    <Dial $size={19} $tone="light">
                      <svg width="16" height="16" viewBox="0 0 16 16">
                        <circle cx="8" cy="8" r="4.500" fill="none" stroke="#eee" strokeWidth="1.500" />
                        <circle cx="8" cy="8" r="6.300" fill="none" stroke="#eee" strokeWidth="2" strokeDasharray="2.474 2.474" />
                      </svg>
                    </Dial>
                  </ToolButton>
                  <ToolButton $w={25} aria-label="Collapse panel">
                    <Dial $size={19}><Triangle dir="left" size={10} fill="#fff" /></Dial>
                  </ToolButton>
                </WindowTools>
              </Devices>
            </TabStrip>

            <Content>
              <Upper>
                <Intro>
                  <Title>ColorChecker</Title>
                  <Lead>Display analysis is performed with the X-Rite/<br />Pantone ColorChecker® target colors.</Lead>
                  <FormulaRow>
                    <label htmlFor="formula">dE Formula:</label>
                    <SelectBox>
                      <Select id="formula" defaultValue="2000"><option>2000</option></Select>
                      <Triangle dir="down" size={10} fill="#000" />
                    </SelectBox>
                  </FormulaRow>
                  <ErrorBars />
                </Intro>

                <Middle>
                  <DeltaRow>
                    <DeltaChart name="DeltaL" value={-0.17} />
                    <DeltaChart name="DeltaC" value={-0.92} />
                    <DeltaChart name="DeltaH" value={1.09} />
                  </DeltaRow>
                  <SwatchPanel>
                    <SwatchRow>
                      <SideLabels><Upright>Actual</Upright><Upright>Target</Upright></SideLabels>
                      {comparisons.map(([name, actual, target]) => (
                        <Swatch key={name}>
                          <SwatchFill $actual={actual} $target={target} />
                          <SwatchName>{name}</SwatchName>
                        </Swatch>
                      ))}
                    </SwatchRow>
                    <ScrollBar height={19} arrow={14} from={0} to={18} />
                  </SwatchPanel>
                </Middle>

                <CieChart />
              </Upper>

              <Lower>
                <Readings>
                  <Summary>Avg dE2000: 1,19</Summary>
                  <Summary>Max dE2000: 3,04</Summary>
                  <ReadingTitle>Current Reading</ReadingTitle>
                  <Reading><span>x: 0,4445</span><span>y: 0,3854</span></Reading>
                  <ReadingGap>fL: 29,85</ReadingGap>
                  <Reading>cd/m²: 102,29</Reading>
                </Readings>
                <ReadingTable />
              </Lower>
            </Content>

            <Bottom>
              <Palette>
                <PaletteRow>
                  {patches.slice(0, 25).map(([name, c]) => {
                    const multi = twoLine.includes(name);
                    return (
                      <PatchButton key={name}>
                        <Chip $c={c} $short={multi} />
                        <ChipName $multi={multi}>{multi ? name.replace(' ', '\n') : name}</ChipName>
                      </PatchButton>
                    );
                  })}
                </PaletteRow>
                <ScrollBar height={11} arrow={10} from={0} to={53} />
              </Palette>
              <StopBlock>
                <Plain aria-label="Expand">
                  <Dial $size={14} $tone="light"><Triangle dir="up" size={8} fill={ink} /></Dial>
                </Plain>
                <Plain aria-label="Pattern window">
                  <svg width="32" height="32" viewBox="0 0 32 32">
                    <rect x="1" y="1" width="30" height="30" rx="4" fill="#a8a8a8" stroke="#262626" strokeWidth="2" />
                    <path d="M2 16H30V28Q30 30 28 30H4Q2 30 2 28Z" fill="#8a8a8a" />
                    <rect x="9" y="9" width="14" height="14" fill="#000" />
                    <rect x="9" y="9" width="14" height="7" fill="#1c1c1c" />
                  </svg>
                </Plain>
              </StopBlock>
              <Transport>
                <TransportRow $cols={6}>
                  {transportIcons.map(([name, icon], i) => (
                    <TransportButton key={name} aria-label={name} $off={i > 3}>
                      <Dial $size={20} $tone={i > 3 ? 'off' : 'light'}>
                        <svg width="20" height="20" viewBox="0 0 20 20">{icon}</svg>
                      </Dial>
                    </TransportButton>
                  ))}
                </TransportRow>
                <TransportRow $cols={2}>
                  <StepButton $side="back">
                    <Dial $size={20} $tone="light">
                      <svg width="20" height="20" viewBox="0 0 20 20"><path d="M10 5L6 10L10 15M14 5L10 10L14 15" fill="none" stroke={ink} strokeWidth="1.500" /></svg>
                    </Dial>
                    Back
                  </StepButton>
                  <StepButton $side="next">
                    <Dial $size={20} $tone="light">
                      <svg width="20" height="20" viewBox="0 0 20 20"><path d="M6 5L10 10L6 15M10 5L14 10L10 15" fill="none" stroke={ink} strokeWidth="1.500" /></svg>
                    </Dial>
                    Next
                  </StepButton>
                </TransportRow>
              </Transport>
            </Bottom>
          </Workspace>
        </Body>
      </Shell>
    </>
  );
}
